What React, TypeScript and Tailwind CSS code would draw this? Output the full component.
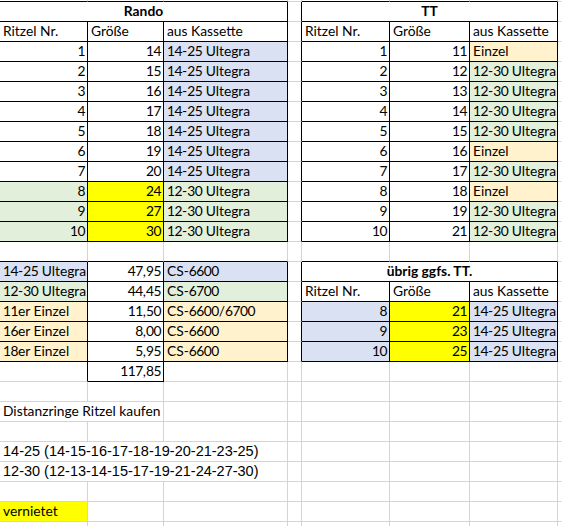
import React from "react";

type Bg = "b" | "g" | "o" | "y";
type Cell = {
  t?: string;
  a?: "l" | "r" | "c";
  bg?: Bg;
  rb?: boolean;
  bb?: boolean;
  bold?: boolean;
  span?: 2 | 3;
  arial?: boolean;
};

const BG: Record<Bg, string> = {
  b: "bg-[#d9e1f2]",
  g: "bg-[#e2efda]",
  o: "bg-[#fff2cc]",
  y: "bg-[#ffff00]",
};

const T = (t: string, a: "l" | "r" = "l", bg?: Bg): Cell => ({ t, a, bg, rb: true, bb: true });
const E = (rb = false, bb = false): Cell => ({ rb, bb });

const rando: [string, string, string, Bg, Bg | undefined][] = [
  ["1", "14", "14-25 Ultegra", "b", undefined],
  ["2", "15", "14-25 Ultegra", "b", undefined],
  ["3", "16", "14-25 Ultegra", "b", undefined],
  ["4", "17", "14-25 Ultegra", "b", undefined],
  ["5", "18", "14-25 Ultegra", "b", undefined],
  ["6", "19", "14-25 Ultegra", "b", undefined],
  ["7", "20", "14-25 Ultegra", "b", undefined],
  ["8", "24", "12-30 Ultegra", "g", "y"],
  ["9", "27", "12-30 Ultegra", "g", "y"],
  ["10", "30", "12-30 Ultegra", "g", "y"],
];

const tt: [string, string, string, Bg][] = [
  ["1", "11", "Einzel", "o"],
  ["2", "12", "12-30 Ultegra", "g"],
  ["3", "13", "12-30 Ultegra", "g"],
  ["4", "14", "12-30 Ultegra", "g"],
  ["5", "15", "12-30 Ultegra", "g"],
  ["6", "16", "Einzel", "o"],
  ["7", "17", "12-30 Ultegra", "g"],
  ["8", "18", "Einzel", "o"],
  ["9", "19", "12-30 Ultegra", "g"],
  ["10", "21", "12-30 Ultegra", "g"],
];

const rows: Cell[][] = [];

rows.push([
  { t: "Rando", a: "c", bold: true, span: 3, rb: true, bb: true },
  E(true),
  { t: "TT", a: "c", bold: true, span: 3, rb: true, bb: true },
  E(),
]);
rows.push([
  T("Ritzel Nr."),
  T("Größe"),
  T("aus Kassette"),
  E(true),
  T("Ritzel Nr."),
  T("Größe"),
  T("aus Kassette"),
  E(),
]);
for (let i = 0; i < 10; i++) {
  const r = rando[i];
  const s = tt[i];
  rows.push([
    T(r[0], "r", r[4] ? "g" : undefined),
    T(r[1], "r", r[4]),
    T(r[2], "l", r[3]),
    E(true),
    T(s[0], "r"),
    T(s[1], "r"),
    T(s[2], "l", s[3]),
    E(),
  ]);
}
rows.push([E(false, true), E(false, true), E(false, true), E(), E(false, true), E(false, true), E(false, true), E()]);
rows.push([
  T("14-25 Ultegra", "l", "b"),
  T("47,95", "r"),
  T("CS-6600", "l", "b"),
  E(true),
  { t: "übrig ggfs. TT.", a: "c", bold: true, span: 3, rb: true, bb: true },
  E(),
]);
rows.push([
  T("12-30 Ultegra", "l", "g"),
  T("44,45", "r"),
  T("CS-6700", "l", "g"),
  E(true),
  T("Ritzel Nr."),
  T("Größe"),
  T("aus Kassette"),
  E(),
]);
const lower: [string, string, string, string, string][] = [
  ["11er Einzel", "11,50", "CS-6600/6700", "8", "21"],
  ["16er Einzel", "8,00", "CS-6600", "9", "23"],
  ["18er Einzel", "5,95", "CS-6600", "10", "25"],
];
for (const l of lower) {
  rows.push([
    T(l[0], "l", "o"),
    T(l[1], "r"),
    T(l[2], "l", "o"),
    E(true),
    T(l[3], "r", "b"),
    T(l[4], "r", "y"),
    T("14-25 Ultegra", "l", "b"),
    E(),
  ]);
}
rows.push([E(true), { t: "117,85", a: "r", rb: true, bb: true }, E(), E(), E(), E(), E(), E()]);
rows.push([E(), E(), E(), E(), E(), E(), E(), E()]);
rows.push([{ t: "Distanzringe Ritzel kaufen", a: "l", span: 2 }, E(), E(), E(), E(), E(), E()]);
rows.push([E(), E(), E(), E(), E(), E(), E(), E()]);
rows.push([{ t: "14-25 (14-15-16-17-18-19-20-21-23-25)", a: "l", span: 3, arial: true }, E(), E(), E(), E(), E()]);
rows.push([{ t: "12-30 (12-13-14-15-17-19-21-24-27-30)", a: "l", span: 3, arial: true }, E(), E(), E(), E(), E()]);
rows.push([E(), E(), E(), E(), E(), E(), E(), E()]);
rows.push([{ t: "vernietet", a: "l", bg: "y" }, E(), E(), E(), E(), E(), E(), E()]);
rows.push([E(), E(), E(), E(), E(), E(), E(), E()]);

const topStrip: boolean[] = [true, true, true, false, true, true, true, false];

function Narrow({ text }: { text: string }) {
  const parts = text.split(/(\d+)/);
  return (
    <span>
      {parts.map((p, i) =>
        /^\d+$/.test(p) ? (
          <span key={i} className="tracking-[-0.5px]">
            {p}
          </span>
        ) : (
          <React.Fragment key={i}>{p}</React.Fragment>
        )
      )}
    </span>
  );
}

function CellView({ c, last }: { c: Cell; last: boolean }) {
  const align =
    c.a === "r" ? "justify-end pr-[2px]" : c.a === "c" ? "justify-center" : "justify-start pl-[3px]";
  const rb = last ? "border-r-transparent" : c.rb ? "border-r-black" : "border-r-[#d4d4d4]";
  const bb = c.bb ? "border-b-black" : "border-b-[#d4d4d4]";
  const bg = c.bg ? BG[c.bg] : "bg-white";
  const span = c.span === 3 ? "col-span-3" : c.span === 2 ? "col-span-2" : "";
  const font = c.arial
    ? "font-['Liberation_Sans',Arial,sans-serif] text-[14.5px] pb-[3px]"
    : "font-[Lato,sans-serif] text-[13.8px] pb-[3px]";
  const weight = c.bold ? "font-bold" : "font-normal";
  return (
    <div
      className={`flex h-[20px] items-end overflow-hidden whitespace-nowrap border-r border-b leading-none text-black ${align} ${rb} ${bb} ${bg} ${span} ${font} ${weight}`}
    >
      {c.t && (c.arial ? <span>{c.t}</span> : <Narrow text={c.t} />)}
    </div>
  );
}

export default function App() {
  return (
    <div className="h-[526px] w-[562px] overflow-hidden bg-white">
      <div className="grid grid-cols-[88px_76px_124px_14px_88px_80px_88px_1fr]">
        {topStrip.map((b, i) => (
          <div
            key={`t${i}`}
            className={`h-[2px] border-r border-b ${i === 7 ? "border-r-transparent" : "border-r-[#d4d4d4]"} ${
              b ? "border-b-black" : "border-b-[#d4d4d4]"
            }`}
          />
        ))}
        {rows.map((row, ri) => {
          let col = 0;
          return row.map((c, ci) => {
            col += c.span ?? 1;
            return <CellView key={`${ri}-${ci}`} c={c} last={col === 8} />;
          });
        })}
      </div>
    </div>
  );
}
